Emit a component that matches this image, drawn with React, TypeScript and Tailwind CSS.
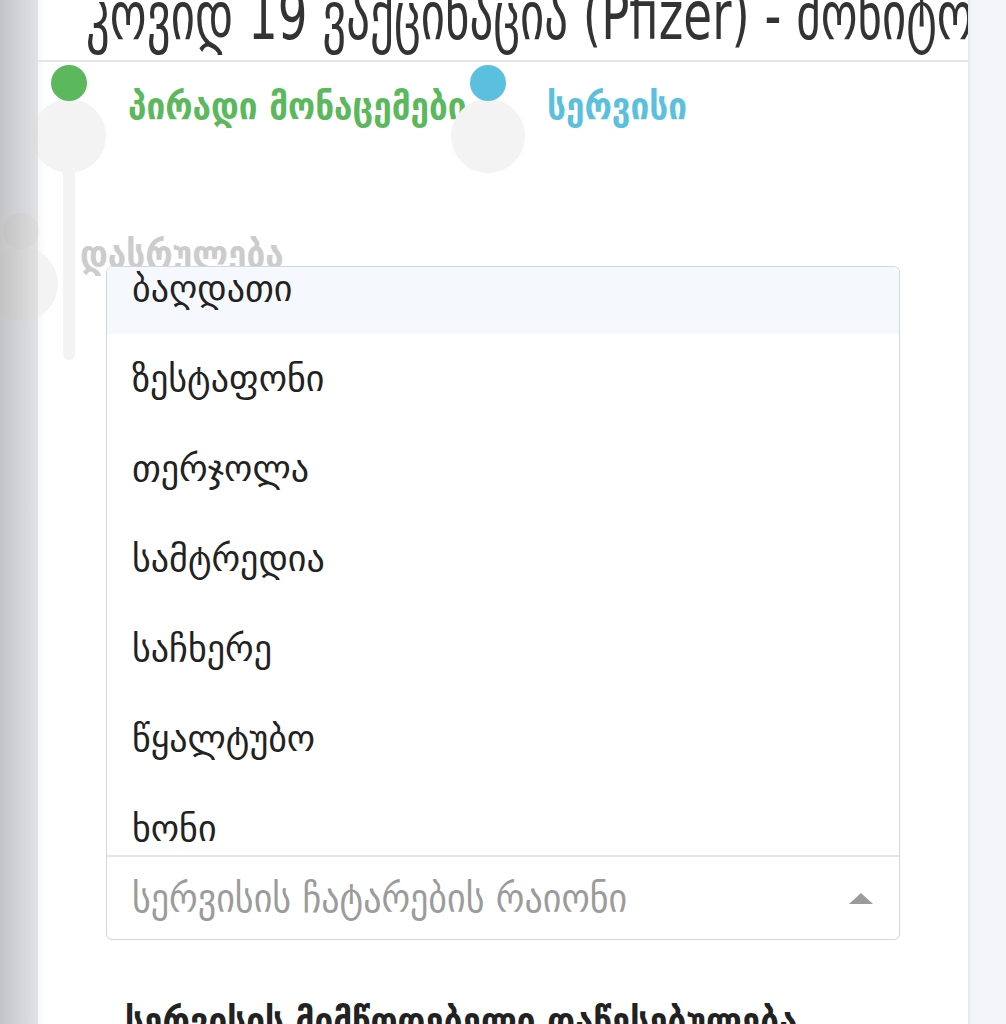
import type { ReactNode } from 'react'

const geo = "font-['DejaVu_Sans_Condensed','DejaVu_Sans',sans-serif]"
const geoPlain = "font-['DejaVu_Sans',sans-serif]"

const districts = [
  'ბაღდათი',
  'ზესტაფონი',
  'თერჯოლა',
  'სამტრედია',
  'საჩხერე',
  'წყალტუბო',
  'ხონი',
]

interface StepProps {
  label: string
  tone: 'done' | 'active' | 'idle'
  width?: string
  connector?: boolean
  children?: ReactNode
}

// One stepper item: a small status dot above a pale halo, label to the right.
function Step({ label, tone, width, connector }: StepProps) {
  const dot =
    tone === 'done'
      ? 'bg-[#5cb85c]'
      : tone === 'active'
        ? 'bg-[#5bc0de]'
        : 'bg-[#f0f0f0]'
  const text =
    tone === 'done'
      ? 'text-[#5cb85c]'
      : tone === 'active'
        ? 'text-[#5bc0de]'
        : 'text-[#cccccc]'

  return (
    <div className={`relative shrink-0 ${width ?? ''}`}>
      {connector && (
        <div className="absolute left-[25px] top-[47px] w-[12px] h-[224px] rounded-b-full bg-[#f3f3f3]" />
      )}
      <div className="absolute left-[-6px] top-[10px] w-[74px] h-[74px] rounded-full bg-[#f3f3f3]" />
      <div className={`absolute left-[13px] top-[-24px] w-[36px] h-[36px] rounded-full ${dot}`} />
      <p className={`relative pl-[90px] text-[37px] font-bold leading-[36px] whitespace-nowrap ${geo} ${text}`}>
        {label}
      </p>
    </div>
  )
}

export default function App() {
  return (
    <div className="relative h-[1024px] w-full overflow-hidden bg-[#f4f5f8]">
      <div className="flex h-full">
        <div className="w-[38px] shrink-0" />

        <div className="w-[932px] shrink-0 bg-white border-r-2 border-[#e9eaed] shadow-[inset_10px_0_10px_-10px_rgba(0,0,0,0.07)]">
          {/* header, scrolled so only the lower half of the title shows */}
          <div className="h-[62px] border-b-2 border-[#e6e6e6] overflow-hidden">
            <h1
              className={`mt-[-11px] pl-[48px] text-[52px] leading-[64px] whitespace-nowrap text-[#333] scale-y-[1.3] origin-[0_50px] ${geo}`}
            >
              კოვიდ 19 ვაქცინაცია (Pfizer) - მონიტორინგი
            </h1>
          </div>

          {/* stepper */}
          <div className="h-[204px]">
            <div className="flex pt-[27px]">
              <Step label="პირადი მონაცემები" tone="done" width="w-[419px]" connector />
              <Step label="სერვისი" tone="active" />
            </div>
            <div className="flex mt-[112px] ml-[-48px]">
              <Step label="დასრულება" tone="idle" />
            </div>
          </div>

          {/* open select, menu above the field */}
          <div className="relative z-10 mx-[68px] rounded-md border border-[#d6d6d6] bg-white overflow-hidden">
            <div className="h-[588px] overflow-hidden">
              <ul className="mt-[-23px]">
                {districts.map((d, i) => (
                  <li
                    key={d}
                    className={`h-[90px] flex items-center pl-[25px] text-[36px] text-[#222] ${geoPlain} ${
                      i === 0 ? 'bg-[#f5f9fd]' : ''
                    }`}
                  >
                    {d}
                  </li>
                ))}
              </ul>
            </div>
            <div className="h-[84px] border-t-2 border-[#e4e4e4] flex items-center justify-between pl-[25px] pr-[26px]">
              <span className={`text-[40px] leading-[48px] text-[#9b9b9b] whitespace-nowrap ${geo}`}>
                სერვისის ჩატარების რაიონი
              </span>
              <svg width="24" height="11" viewBox="0 0 24 11" className="shrink-0">
                <path d="M12 0 L24 11 L0 11 Z" fill="#9b9b9b" />
              </svg>
            </div>
          </div>

          <p className={`mt-[64px] pl-[87px] text-[37px] font-bold leading-[36px] whitespace-nowrap text-[#222] ${geo}`}>
            სერვისის მიმწოდებელი დაწესებულება
          </p>
        </div>
      </div>

      {/* drawer shadow over the left edge */}
      <div className="absolute left-0 top-0 h-full w-[38px] z-20 bg-gradient-to-r from-[rgba(0,0,0,0.2)] to-[rgba(0,0,0,0.08)]" />
    </div>
  )
}
